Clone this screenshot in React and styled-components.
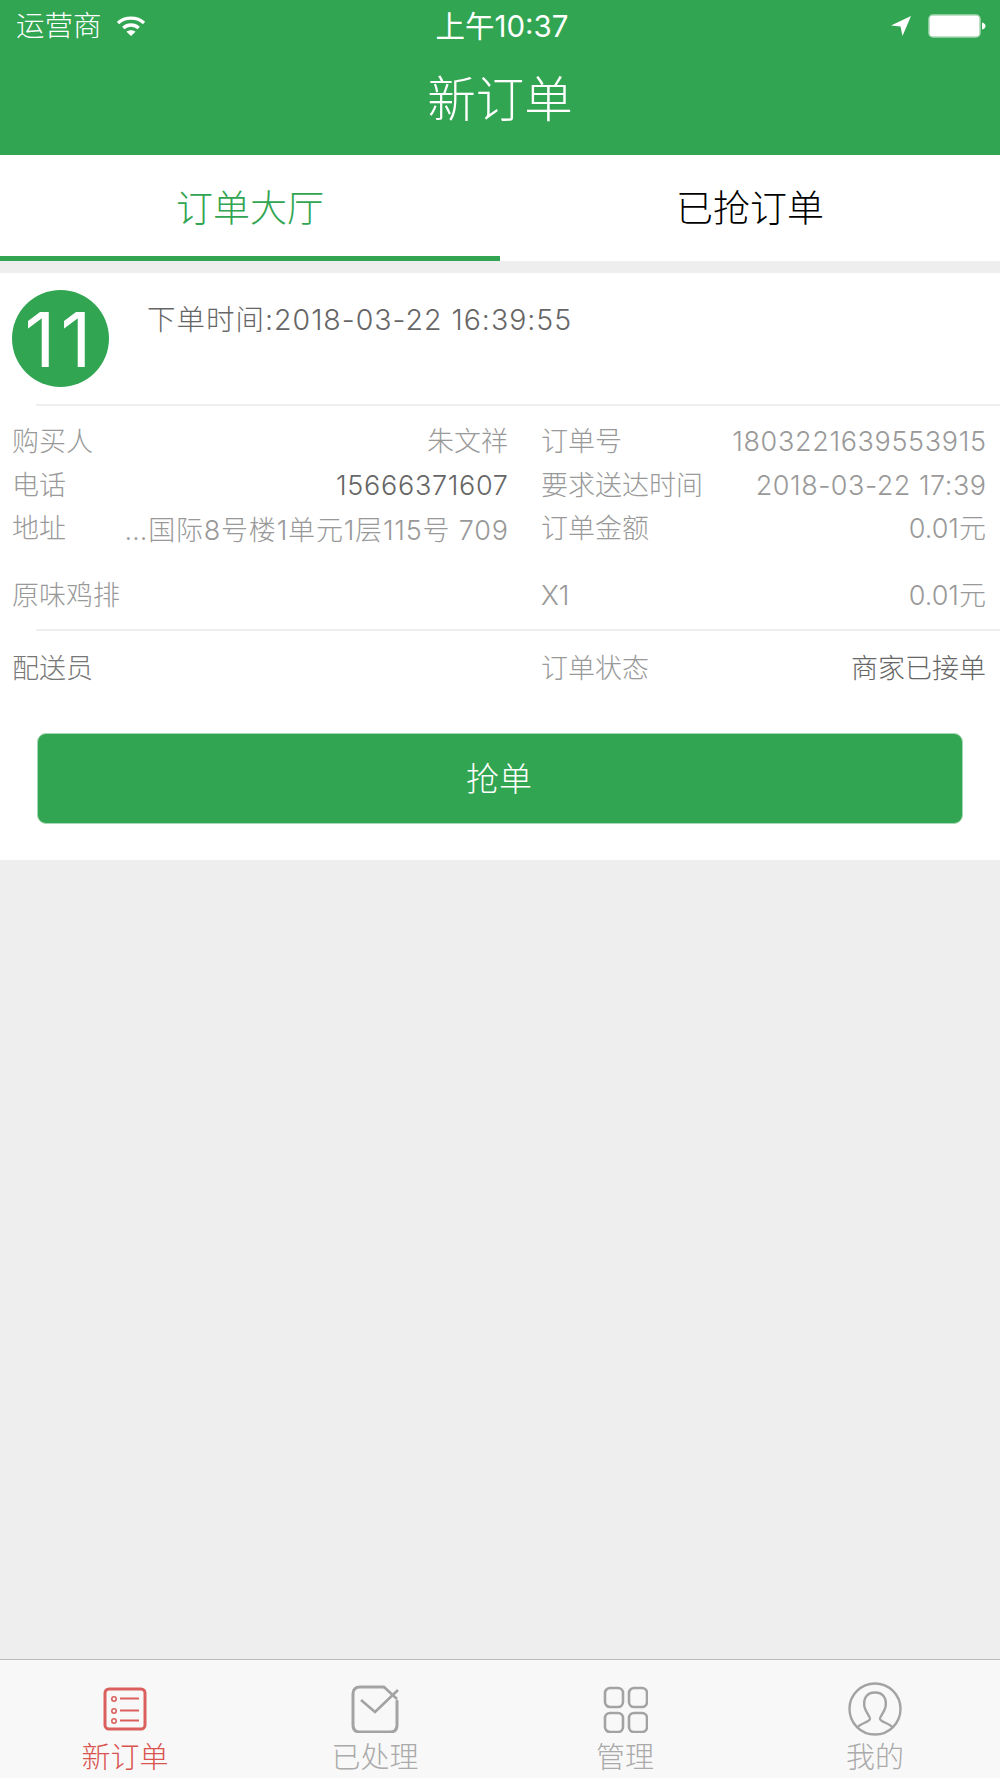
import React from 'react';
import styled, { createGlobalStyle } from 'styled-components';

const Global = createGlobalStyle`
  html, body { margin: 0; padding: 0; background: #eeeeee; }
  * { box-sizing: border-box; }
  body { font-family: "Inter", "Noto Sans CJK SC", sans-serif; font-weight: 300; }
`;
const GREEN = '#31a551';

const Page = styled.div`
  width: 1000px; height: 1778px; display: flex; flex-direction: column; background: #eeeeee; overflow: hidden;
`;
const Header = styled.header`
  height: 155px; background: ${GREEN}; color: #fff; display: flex; flex-direction: column;
`;
const StatusBar = styled.div`
  height: 50px; padding: 2px 14px 0 16px; display: grid; grid-template-columns: 1fr auto 1fr; align-items: center;
`;
const StatusLeft = styled.div`display: flex; align-items: center; gap: 14px; font-size: 28.5px; line-height: 48px;`;
const StatusTime = styled.div`font-size: 29.5px; font-weight: 400; line-height: 48px; letter-spacing: 0; margin-left: 2px;`;
const StatusRight = styled.div`display: flex; align-items: center; justify-content: flex-end; gap: 16px;`;
const Title = styled.h1`
  margin: 0; flex: 1; display: flex; align-items: center; justify-content: center; padding-bottom: 14px;
  font-size: 48.5px; font-weight: 300;
`;
const Tabs = styled.nav`height: 106px; background: #fff; display: grid; grid-template-columns: 1fr 1fr;`;
const Tab = styled.div`
  display: flex; align-items: center; justify-content: center; font-size: 37px;
  color: ${p => (p.$active ? GREEN : '#000')};
  border-bottom: 5px solid ${p => (p.$active ? GREEN : 'transparent')};
`;
const Card = styled.section`margin-top: 12px; height: 587px; background: #fff; display: flex; flex-direction: column;`;
const CardHead = styled.div`height: 131px; padding: 17px 0 0 12px; display: flex; align-items: flex-start;`;
const Badge = styled.div`
  width: 97px; height: 97px; border-radius: 50%; background: ${GREEN}; color: #fff; flex: none;
  display: flex; align-items: center; justify-content: center;
  font-size: 76px; font-weight: 400; letter-spacing: 5px;
`;
const OrderTime = styled.div`margin: 10px 0 0 38px; font-size: 28.5px; line-height: 40px; color: #666; letter-spacing: 1px;`;
const Divider = styled.div`height: 2px; margin-left: 36px; background: #eeeeee; flex: none;`;
const Row = styled.div`
  height: 43.5px; padding: 0 14px 0 12px; flex: none; margin-top: ${p => p.$mt || 0}px;
  display: grid; grid-template-columns: 496px 445px; column-gap: 33px; align-items: center; font-size: 27px;
`;
const Pair = styled.div`display: flex; justify-content: space-between; align-items: baseline; min-width: 0; white-space: nowrap;`;
const Label = styled.span`color: ${p => (p.$dark ? '#777' : '#999')};`;
const Value = styled.span`
  color: ${p => (p.$dark ? '#666' : '#999')};
  letter-spacing: ${p => p.$spacing || 0}px;
  margin-right: ${p => -(p.$spacing || 0)}px;
  ${p => (p.$nudge ? 'transform: translateY(2px);' : '')}
`;
const DetailBlock = styled.div`flex: none; height: 223px; padding-top: 12px; display: flex; flex-direction: column;`;
const FooterRow = styled.div`flex: none; padding-top: 14px; display: flex; flex-direction: column;`;
const GrabWrap = styled.div`padding: 44px 37px 0 37px;`;
const Grab = styled.button`
  width: 100%; height: 91px; border: 1px solid #a9d9b6; border-radius: 9px; background: ${GREEN}; color: #fff;
  font-family: inherit; font-size: 33px; font-weight: 300; display: flex; align-items: center; justify-content: center; padding: 0 2px 2px 0;
`;
const Spacer = styled.div`flex: 1;`;
const TabBar = styled.footer`
  height: 119px; flex: none; background: #f8f8f8; border-top: 1px solid #bdbdbd;
  display: grid; grid-template-columns: repeat(4, 250px);
`;
const BarItem = styled.div`
  display: flex; flex-direction: column; align-items: center; height: 118px;
  color: ${p => (p.$active ? '#d9534f' : '#aaa')};
`;
const BarIcon = styled.div`height: 78px; flex: none; display: flex; align-items: flex-end; padding-bottom: ${p => p.$pb ?? 0}px;`;
const BarLabel = styled.div`font-size: 29px; line-height: 40px;`;

const Wifi = () => (
  <svg width="30" height="22" viewBox="0 0 30 22" fill="none" stroke="#fff" strokeWidth="3.4">
    <path d="M2 8 C9 1.5 21 1.5 28 8" />
    <path d="M7.3 13 C11.5 9 18.5 9 22.7 13" />
    <path d="M15 21 L10.5 16.8 C13 14.8 17 14.8 19.5 16.8 Z" fill="#fff" stroke="none" />
  </svg>
);
const Arrow = () => (
  <svg width="22" height="22" viewBox="0 0 22 22"><path d="M21 1 L1 10.5 L10.5 11.5 L12.5 21 Z" fill="#fff" /></svg>
);
const Battery = () => (
  <svg width="58" height="24" viewBox="0 0 58 24">
    <rect x="1" y="1" width="51" height="22" rx="4" fill="#fff" stroke="#a9d9b6" strokeWidth="1.5" />
    <path d="M54 8.5 C56.5 9 57.5 10.5 57.5 12 C57.5 13.5 56.5 15 54 15.5 Z" fill="#fff" />
  </svg>
);
const ListIcon = () => (
  <svg width="44" height="44" viewBox="0 0 44 44" fill="none" stroke="#d9605c">
    <rect x="2" y="2" width="40" height="40" rx="4" strokeWidth="3" />
    <circle cx="11" cy="12" r="2.2" strokeWidth="1.6" /><circle cx="11" cy="24" r="2.2" strokeWidth="1.6" /><circle cx="11" cy="34" r="2.2" strokeWidth="1.6" />
    <path d="M17 11.5H36M17 23.5H36M17 33.5H36" strokeWidth="2" />
  </svg>
);
const MailIcon = () => (
  <svg width="48" height="48" viewBox="0 0 48 48" fill="none" stroke="#a3a3a3" strokeWidth="3">
    <path d="M33 2 H9 Q2 2 2 9 V40 Q2 47 9 47 H39 Q46 47 46 40 V16" strokeLinecap="round" />
    <path d="M33 2 L46 14" strokeWidth="2.6" />
    <path d="M10 15 L24 27 L47 5" strokeWidth="2.6" />
  </svg>
);
const GridIcon = () => (
  <svg width="45" height="47" viewBox="0 0 45 47" fill="none" stroke="#a3a3a3" strokeWidth="2.6">
    <rect x="2" y="2" width="18" height="19" rx="5" /><rect x="26" y="2" width="18" height="19" rx="5" />
    <rect x="2" y="27" width="18" height="19" rx="5" /><rect x="26" y="27" width="18" height="19" rx="5" />
  </svg>
);
const UserIcon = () => (
  <svg width="54" height="54" viewBox="0 0 54 54" fill="none" stroke="#a3a3a3" strokeWidth="2.4">
    <circle cx="27" cy="27" r="25.5" />
    <path d="M9 46 C12 41 21 40.5 22 37 C22.5 35 18 31 16.5 25 C15 16 19 10.5 27 10.5 C35 10.5 39 16 37.5 25 C36 31 31.5 35 32 37 C33 40.5 42 41 45 46" />
  </svg>
);

function Info({ l, r, dark, nudge, labelDark, spacing }) {
  return (
    <Pair>
      <Label $dark={labelDark}>{l}</Label>
      <Value $dark={dark} $nudge={nudge} $spacing={spacing}>{r}</Value>
    </Pair>
  );
}

export default function App() {
  return (
    <Page>
      <Global />
      <Header>
        <StatusBar>
          <StatusLeft>运营商<Wifi /></StatusLeft>
          <StatusTime>上午10:37</StatusTime>
          <StatusRight><Arrow /><Battery /></StatusRight>
        </StatusBar>
        <Title>新订单</Title>
      </Header>
      <Tabs>
        <Tab $active>订单大厅</Tab>
        <Tab>已抢订单</Tab>
      </Tabs>
      <Card>
        <CardHead>
          <Badge>11</Badge>
          <OrderTime>下单时间:2018-03-22 16:39:55</OrderTime>
        </CardHead>
        <Divider />
        <DetailBlock>
          <Row><Info l="购买人" r="朱文祥" /><Info l="订单号" r="1803221639553915" spacing={0.65} /></Row>
          <Row><Info l="电话" r="15666371607" dark spacing={0.7} /><Info l="要求送达时间" r="2018-03-22 17:39" spacing={0.5} /></Row>
          <Row><Info l="地址" r="…国际8号楼1单元1层115号 709" nudge spacing={0.8} /><Info l="订单金额" r="0.01元" /></Row>
          <Row $mt={23}><Info l="原味鸡排" r="" /><Info l="X1" r="0.01元" /></Row>
        </DetailBlock>
        <Divider />
        <FooterRow>
          <Row><Info l="配送员" r="" labelDark /><Info l="订单状态" r="商家已接单" dark /></Row>
        </FooterRow>
        <GrabWrap><Grab>抢单</Grab></GrabWrap>
      </Card>
      <Spacer />
      <TabBar>
        <BarItem $active><BarIcon $pb={7}><ListIcon /></BarIcon><BarLabel>新订单</BarLabel></BarItem>
        <BarItem><BarIcon $pb={5}><MailIcon /></BarIcon><BarLabel>已处理</BarLabel></BarItem>
        <BarItem><BarIcon $pb={5}><GridIcon /></BarIcon><BarLabel>管理</BarLabel></BarItem>
        <BarItem><BarIcon $pb={2}><UserIcon /></BarIcon><BarLabel>我的</BarLabel></BarItem>
      </TabBar>
    </Page>
  );
}
